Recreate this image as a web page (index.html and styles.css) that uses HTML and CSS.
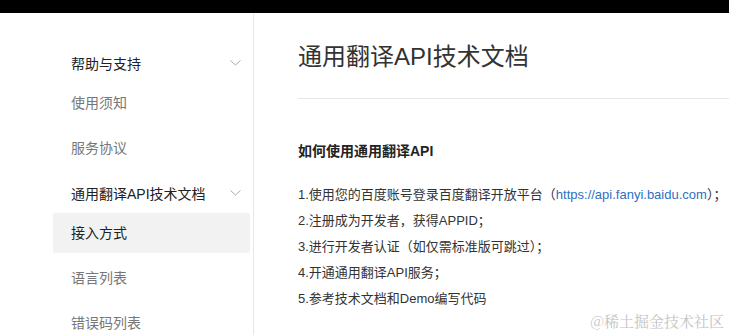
FILE: index.html
```html
<!DOCTYPE html>
<html lang="zh-CN">
<head>
	<meta charset="UTF-8">
	<title>通用翻译API技术文档</title>
	<link rel="stylesheet" href="styles.css">
</head>
<body>
	<div class="topbar"></div>
	<div class="page">
		<aside class="sidebar">
			<div class="group">
				<div class="group-title">
					<span>帮助与支持</span>
					<svg class="chevron" width="11" height="6" viewBox="0 0 11 6"><path d="M0.5 0.5 L5.5 5 L10.5 0.5" fill="none" stroke="#aaa" stroke-width="1"/></svg>
				</div>
				<ul class="items">
					<li>使用须知</li>
					<li>服务协议</li>
				</ul>
			</div>
			<div class="group">
				<div class="group-title">
					<span>通用翻译API技术文档</span>
					<svg class="chevron" width="11" height="6" viewBox="0 0 11 6"><path d="M0.5 0.5 L5.5 5 L10.5 0.5" fill="none" stroke="#aaa" stroke-width="1"/></svg>
				</div>
				<ul class="items">
					<li class="active">接入方式</li>
					<li>语言列表</li>
					<li>错误码列表</li>
				</ul>
			</div>
		</aside>
		<main class="content">
			<h1 class="title">通用翻译API技术文档</h1>
			<h2 class="subtitle">如何使用通用翻译API</h2>
			<ol class="steps">
				<li>1.使用您的百度账号登录百度翻译开放平台（<a href="#">https://api.fanyi.baidu.com</a>）；</li>
				<li>2.注册成为开发者，获得APPID；</li>
				<li>3.进行开发者认证（如仅需标准版可跳过）；</li>
				<li>4.开通通用翻译API服务；</li>
				<li>5.参考技术文档和Demo编写代码</li>
			</ol>
		</main>
	</div>
	<div class="watermark">@稀土掘金技术社区</div>
</body>
</html>
```
FILE: styles.css
```css
body {
	margin: 0;
	height: 335px;
	overflow: hidden;
	background: #fff;
	font-family: "Liberation Sans", "Noto Sans CJK SC", sans-serif;
	color: #333;
	position: relative;
}

.topbar {
	height: 13px;
	background: #000;
}

.page {
	display: flex;
}

.sidebar {
	width: 254px;
	min-height: 322px;
	box-sizing: border-box;
	padding: 30px 3px 0 53px;
	border-right: 1px solid #e8e8e8;
	display: flex;
	flex-direction: column;
	gap: 5px;
	flex-shrink: 0;
}

.group-title {
	height: 40px;
	display: flex;
	align-items: center;
	justify-content: space-between;
	padding: 0 9px 0 18px;
	font-size: 14px;
	color: #222;
}

.items {
	list-style: none;
	margin: 0;
	padding: 0;
	display: flex;
	flex-direction: column;
	gap: 5px;
}

.items li {
	height: 40px;
	line-height: 40px;
	padding-left: 18px;
	font-size: 14px;
	color: #777;
	border-radius: 2px;
}

.items li.active {
	background: #f2f2f2;
	color: #222;
}

.content {
	flex: 1;
	padding-left: 44px;
	white-space: nowrap;
	overflow: hidden;
}

.title {
	margin: 28px 0 0;
	padding-bottom: 25px;
	border-bottom: 1px solid #e6e6e6;
	font-size: 24px;
	line-height: 32px;
	font-weight: normal;
	color: #333;
}

.subtitle {
	margin: 41px 0 0;
	font-size: 14px;
	line-height: 22px;
	font-weight: bold;
	color: #222;
}

.steps {
	list-style: none;
	margin: 20px 0 0;
	padding: 0;
	font-size: 13px;
	line-height: 26px;
	color: #333;
}

.steps a {
	color: #2f6fc4;
	text-decoration: none;
}

.watermark {
	position: absolute;
	right: 5px;
	bottom: 4px;
	font-family: "Noto Serif CJK SC", "Noto Sans CJK SC", serif;
	font-size: 15px;
	color: #c4c4c4;
}
```
